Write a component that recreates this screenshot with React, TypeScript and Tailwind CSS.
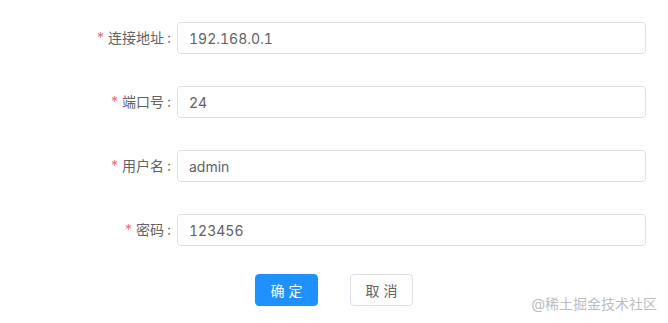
import React from "react";

const rows = [
  { label: "连接地址", value: "192.168.0.1" },
  { label: "端口号", value: "24" },
  { label: "用户名", value: "admin" },
  { label: "密码", value: "123456" },
];

export default function App() {
  return (
    <div
      className="relative w-[668px] h-[323px] bg-white overflow-hidden"
      style={{ fontFamily: 'Inter, "Noto Sans CJK SC", sans-serif' }}
    >
      <div className="flex flex-col pt-[22px]">
        {rows.map((r) => (
          <div key={r.label} className="flex items-center h-[32px] mb-[32px]">
            <label className="w-[177px] pr-[6px] text-right text-[14px] text-[#606266] leading-[32px]">
              <span className="text-[#F56C6C] mr-[4px]">*</span>
              {r.label}
              <span className="ml-[3px]">:</span>
            </label>
            <div className="w-[469px] h-[32px] border border-[#DCDFE6] rounded-[4px] flex items-center pl-[11px] text-[14px] text-[#606266] tabular-nums">
              {r.value}
            </div>
          </div>
        ))}
        <div className="flex items-center -mt-[4px] pl-[255px] gap-[32px]">
          <button className="w-[63px] h-[32px] rounded-[4px] bg-[#1E90FF] text-white text-[14px] border border-[#1E90FF]">
            确 定
          </button>
          <button className="w-[63px] h-[32px] rounded-[4px] bg-white text-[#606266] text-[14px] border border-[#DCDFE6]">
            取 消
          </button>
        </div>
      </div>
      <div className="absolute right-[11px] bottom-[11px] text-[14px] text-[#BDBDBD] leading-[16px]">
        @稀土掘金技术社区
      </div>
    </div>
  );
}
